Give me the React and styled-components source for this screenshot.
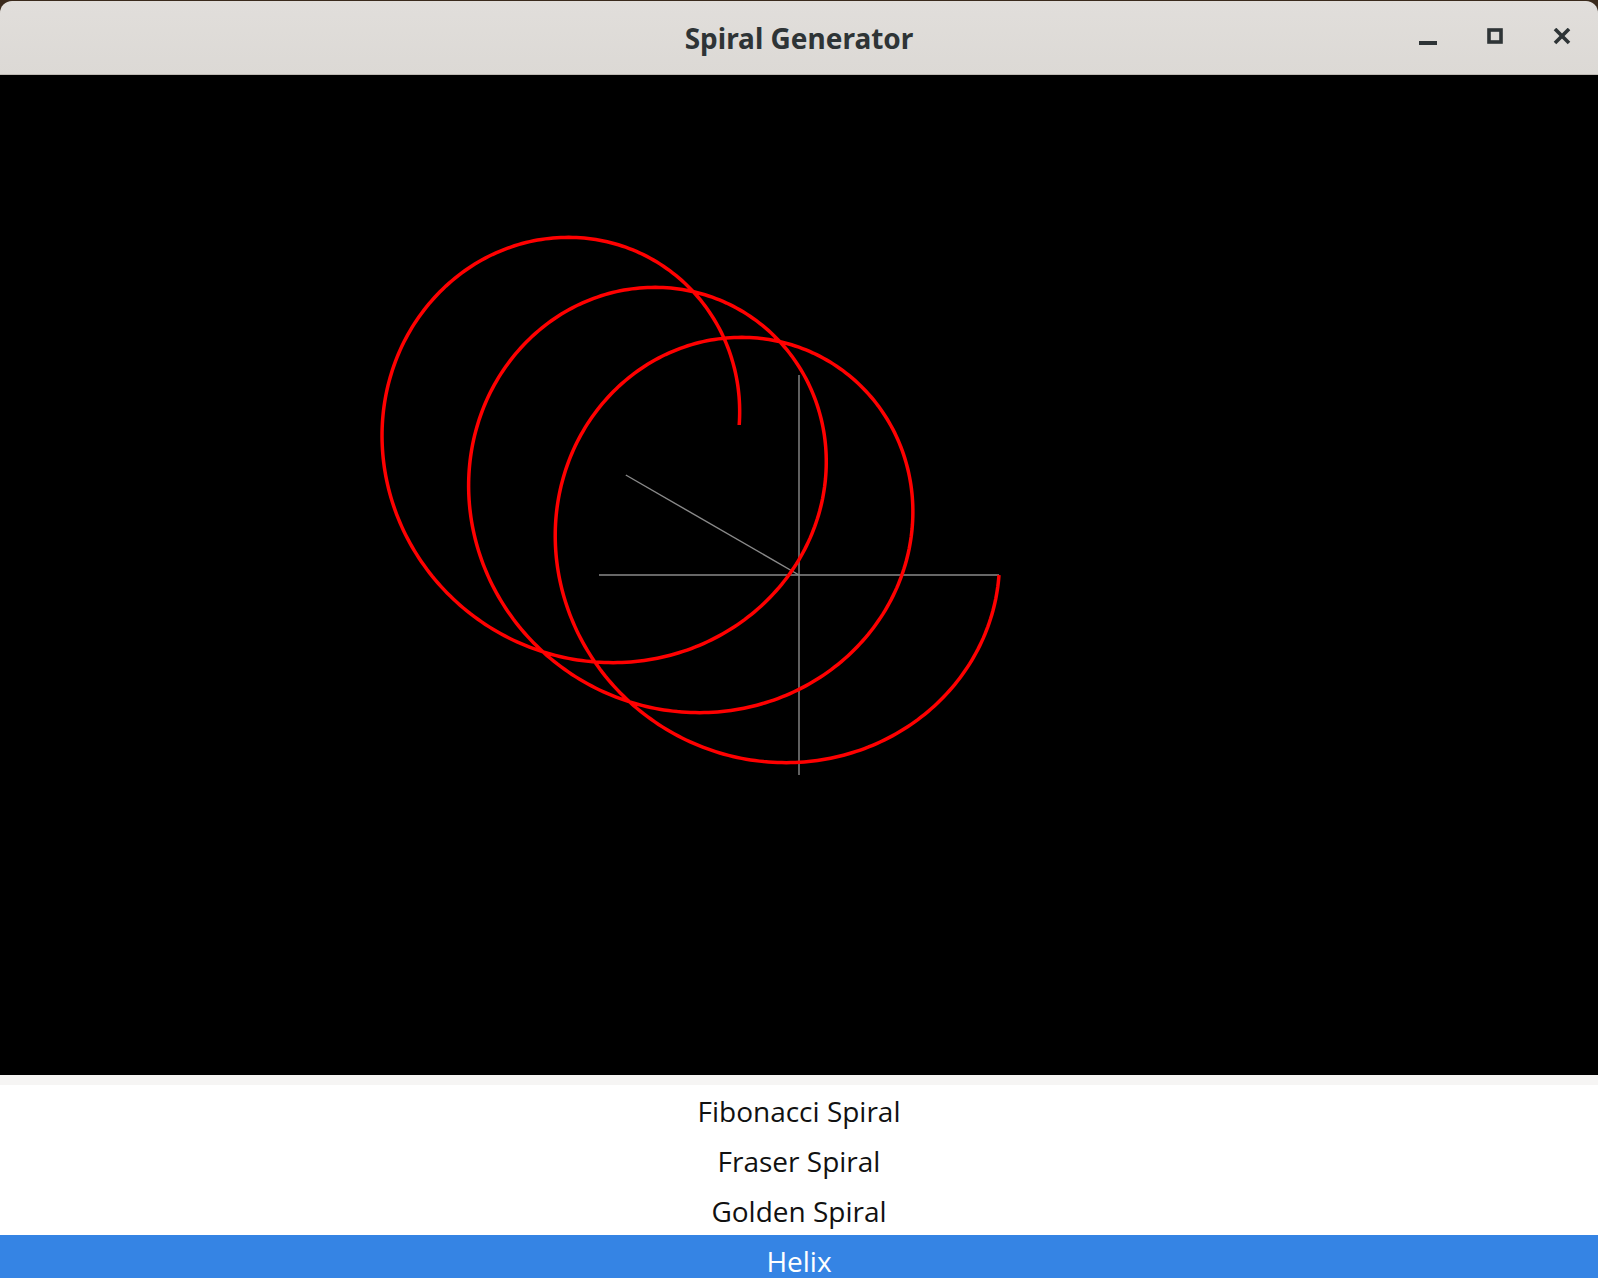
import React from 'react';
import styled, { createGlobalStyle } from 'styled-components';

const GlobalStyle = createGlobalStyle`
  html, body {
    margin: 0;
    padding: 0;
    background: #3a2a1c;
    overflow: hidden;
  }
`

const Window = styled.div`
  width: 1598px;
  height: 1278px;
  display: flex;
  flex-direction: column;
  overflow: hidden;
`

const TitleBar = styled.div`
  flex: 0 0 73px;
  margin-top: 1px;
  display: flex;
  align-items: center;
  justify-content: center;
  position: relative;
  background: linear-gradient(#e1dedb, #dcd9d5);
  border-radius: 12px 12px 0 0;
  border-bottom: 1px solid #bfbab4;
`

const Title = styled.div`
  font-family: "Noto Sans", "Open Sans", sans-serif;
  font-weight: 700;
  font-size: 28px;
  color: #2e3436;
`

const Controls = styled.div`
  position: absolute;
  right: 3px;
  top: 0;
  height: 73px;
  display: flex;
  align-items: center;
`

const ControlButton = styled.div`
  width: 67px;
  height: 73px;
  display: flex;
  align-items: center;
  justify-content: center;
`

const Canvas = styled.div`
  flex: 0 0 1000px;
  min-height: 0;
  background: #000;

  svg {
    display: block;
  }
`

const Strip = styled.div`
  flex: 0 0 10px;
  background: #f6f5f4;
`

const List = styled.div`
  background: #fff;
  display: flex;
  flex-direction: column;
`

const Row = styled.div`
  box-sizing: border-box;
  height: 50px;
  padding-top: 3px;
  line-height: 47px;
  text-align: center;
  font-family: "Open Sans", "Noto Sans", sans-serif;
  font-size: 28px;
  color: ${p => (p.selected ? '#fff' : '#111')};
  background: ${p => (p.selected ? '#3584e4' : '#fff')};
`

const items = ['Fibonacci Spiral', 'Fraser Spiral', 'Golden Spiral', 'Helix']

// helix: circle of radius 200 drifting back along the 30deg z axis, 100px per turn
const helixPoints = () => {
  const cx = 799
  const cy = 500
  const pts = []
  const steps = 900
  const end = Math.PI * 6
  for (let i = 0; i <= steps; i++) {
    const t = (end * i) / steps
    const k = t / (Math.PI * 2)
    const x = cx + 200 * Math.cos(t) - 86.6 * k
    const y = cy + 200 * Math.sin(t) - 50 * k
    pts.push(`${x.toFixed(2)},${y.toFixed(2)}`)
  }
  return pts.join(' ')
}

const App = () => {
  return (
    <Window>
      <GlobalStyle />
      <TitleBar>
        <Title>Spiral Generator</Title>
        <Controls>
          <ControlButton>
            <svg width="20" height="20" viewBox="0 0 20 20">
              <rect x="1" y="13" width="18" height="4" fill="#2e3436" />
            </svg>
          </ControlButton>
          <ControlButton>
            <svg width="20" height="20" viewBox="0 0 20 20">
              <rect x="4" y="2" width="12" height="12" fill="none" stroke="#2e3436" strokeWidth="3.6" />
            </svg>
          </ControlButton>
          <ControlButton>
            <svg width="20" height="20" viewBox="0 0 20 20">
              <path d="M3 1 L17 15 M17 1 L3 15" stroke="#2e3436" strokeWidth="3.6" />
            </svg>
          </ControlButton>
        </Controls>
      </TitleBar>
      <Canvas>
        <svg width="1598" height="1000" viewBox="0 0 1598 1000">
          <g stroke="#8a8a8a" strokeWidth="1.4">
            <line x1="599" y1="500" x2="999" y2="500" />
            <line x1="799" y1="300" x2="799" y2="700" />
            <line x1="799" y1="500" x2="625.8" y2="400" />
          </g>
          <polyline points={helixPoints()} fill="none" stroke="#ff0000" strokeWidth="3.5" />
        </svg>
      </Canvas>
      <Strip />
      <List>
        {items.map(it => (
          <Row key={it} selected={it === 'Helix'}>{it}</Row>
        ))}
      </List>
    </Window>
  );
};

export default App;
